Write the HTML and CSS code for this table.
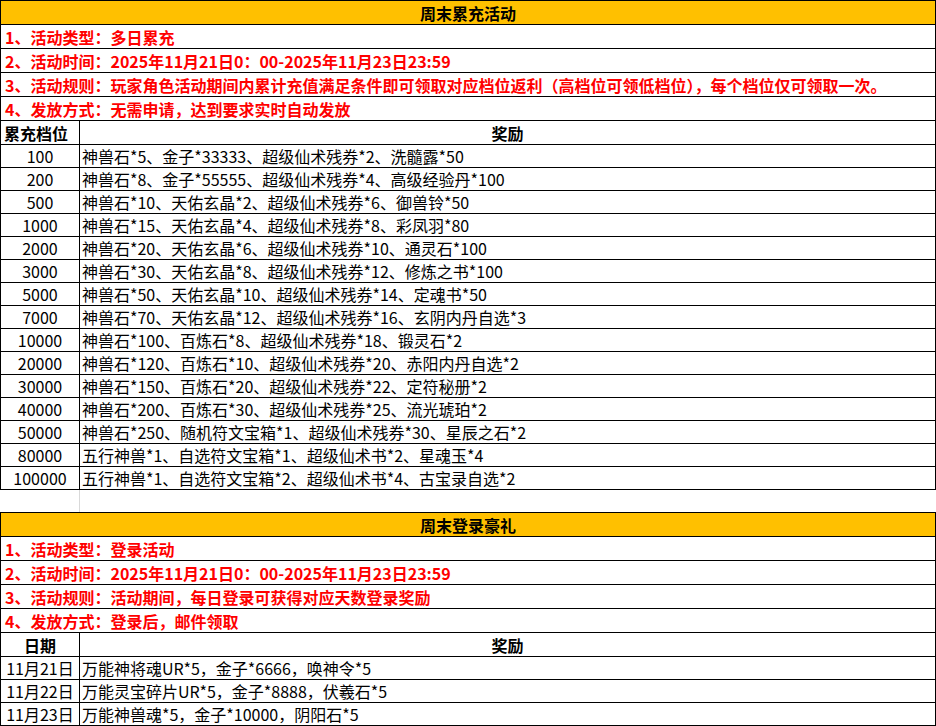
FILE: index.html
```html
<!DOCTYPE html>
<html lang="zh-CN">
<head>
<meta charset="utf-8">
<title>周末活动</title>
<link rel="stylesheet" href="styles.css">
</head>
<body>
<div class="sheet">
  <section class="block">
    <div class="row title">周末累充活动</div>
    <div class="row rule">1、活动类型：多日累充</div>
    <div class="row rule">2、活动时间：2025年11月21日0：00-2025年11月23日23:59</div>
    <div class="row rule">3、活动规则：玩家角色活动期间内累计充值满足条件即可领取对应档位返利（高档位可领低档位），每个档位仅可领取一次。</div>
    <div class="row rule">4、发放方式：无需申请，达到要求实时自动发放</div>
    <div class="row head"><div class="c1 left">累充档位</div><div class="c2 center">奖励</div></div>
    <div class="row data"><div class="c1">100</div><div class="c2">神兽石*5、金子*33333、超级仙术残券*2、洗髓露*50</div></div>
    <div class="row data"><div class="c1">200</div><div class="c2">神兽石*8、金子*55555、超级仙术残券*4、高级经验丹*100</div></div>
    <div class="row data"><div class="c1">500</div><div class="c2">神兽石*10、天佑玄晶*2、超级仙术残券*6、御兽铃*50</div></div>
    <div class="row data"><div class="c1">1000</div><div class="c2">神兽石*15、天佑玄晶*4、超级仙术残券*8、彩凤羽*80</div></div>
    <div class="row data"><div class="c1">2000</div><div class="c2">神兽石*20、天佑玄晶*6、超级仙术残券*10、通灵石*100</div></div>
    <div class="row data"><div class="c1">3000</div><div class="c2">神兽石*30、天佑玄晶*8、超级仙术残券*12、修炼之书*100</div></div>
    <div class="row data"><div class="c1">5000</div><div class="c2">神兽石*50、天佑玄晶*10、超级仙术残券*14、定魂书*50</div></div>
    <div class="row data"><div class="c1">7000</div><div class="c2">神兽石*70、天佑玄晶*12、超级仙术残券*16、玄阴内丹自选*3</div></div>
    <div class="row data"><div class="c1">10000</div><div class="c2">神兽石*100、百炼石*8、超级仙术残券*18、锻灵石*2</div></div>
    <div class="row data"><div class="c1">20000</div><div class="c2">神兽石*120、百炼石*10、超级仙术残券*20、赤阳内丹自选*2</div></div>
    <div class="row data"><div class="c1">30000</div><div class="c2">神兽石*150、百炼石*20、超级仙术残券*22、定符秘册*2</div></div>
    <div class="row data"><div class="c1">40000</div><div class="c2">神兽石*200、百炼石*30、超级仙术残券*25、流光琥珀*2</div></div>
    <div class="row data"><div class="c1">50000</div><div class="c2">神兽石*250、随机符文宝箱*1、超级仙术残券*30、星辰之石*2</div></div>
    <div class="row data"><div class="c1">80000</div><div class="c2">五行神兽*1、自选符文宝箱*1、超级仙术书*2、星魂玉*4</div></div>
    <div class="row data"><div class="c1">100000</div><div class="c2">五行神兽*1、自选符文宝箱*2、超级仙术书*4、古宝录自选*2</div></div>
  </section>
  <div class="blank"><div class="c1"></div><div class="c2"></div></div>
  <section class="block">
    <div class="row title">周末登录豪礼</div>
    <div class="row rule">1、活动类型：登录活动</div>
    <div class="row rule">2、活动时间：2025年11月21日0：00-2025年11月23日23:59</div>
    <div class="row rule">3、活动规则：活动期间，每日登录可获得对应天数登录奖励</div>
    <div class="row rule">4、发放方式：登录后，邮件领取</div>
    <div class="row head"><div class="c1 center">日期</div><div class="c2 center">奖励</div></div>
    <div class="row data"><div class="c1">11月21日</div><div class="c2">万能神将魂UR*5，金子*6666，唤神令*5</div></div>
    <div class="row data"><div class="c1">11月22日</div><div class="c2">万能灵宝碎片UR*5，金子*8888，伏羲石*5</div></div>
    <div class="row data"><div class="c1">11月23日</div><div class="c2">万能神兽魂*5，金子*10000，阴阳石*5</div></div>
  </section>
</div>
</body>
</html>
```

FILE: styles.css
```css
html, body {
  margin: 0;
  padding: 0;
  background: #fff;
}
.sheet {
  width: 936px;
  font-family: "Noto Sans CJK SC", "Noto Sans", sans-serif;
  font-size: 16px;
  color: #000;
}
.block {
  border-top: 1px solid #000;
  border-left: 1px solid #000;
  border-right: 1px solid #000;
}
.row {
  box-sizing: border-box;
  display: flex;
  align-items: center;
  height: 24px;
  border-bottom: 1px solid #000;
  line-height: 22px;
  white-space: nowrap;
}
.title {
  background: #ffc000;
  justify-content: center;
  font-weight: bold;
  height: 24px;
}
.rule {
  color: #ff0000;
  font-weight: bold;
  padding-left: 4px;
  height: 24px;
}
.head {
  height: 24px;
  font-weight: bold;
  align-items: stretch;
}
.data {
  height: 23px;
  align-items: stretch;
}
.c1 {
  box-sizing: border-box;
  width: 79px;
  flex: none;
  border-right: 1px solid #000;
  display: flex;
  align-items: center;
  justify-content: center;
}
.c2 {
  flex: 1;
  display: flex;
  align-items: center;
  padding-left: 2px;
}
.c1.left {
  justify-content: flex-start;
  padding-left: 3px;
}
.c2.center {
  justify-content: center;
  padding-left: 0;
}
.blank {
  display: flex;
  height: 22px;
}
.blank .c1 {
  border-right: 1px solid #d9d9d9;
  width: 80px;
}
```
